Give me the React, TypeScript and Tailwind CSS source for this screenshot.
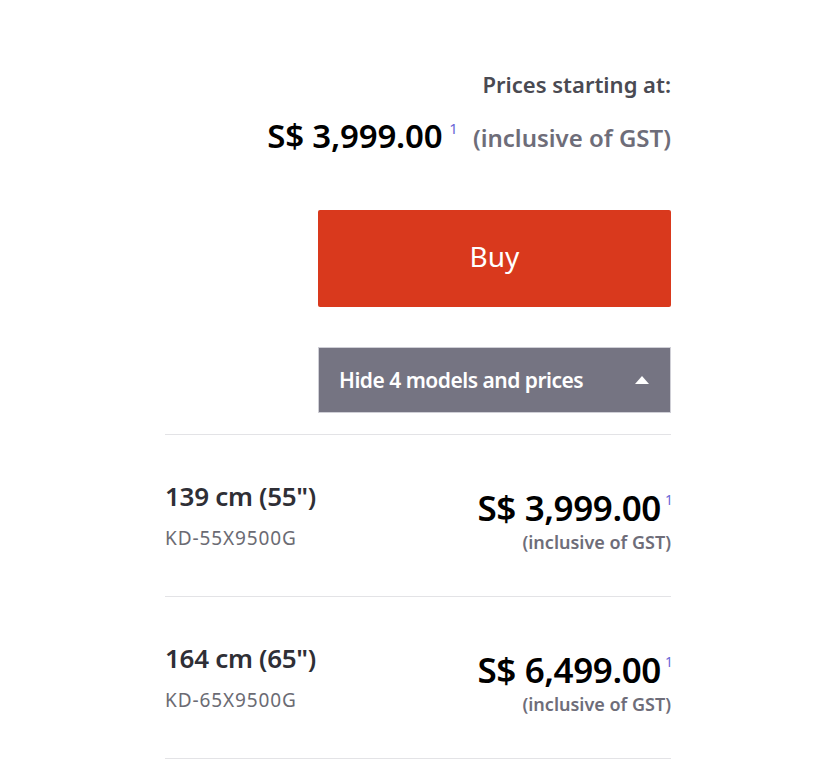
import React from "react";

const font = { fontFamily: '"Noto Sans", "Open Sans", sans-serif' };

function Row({ size, model, price }: { size: string; model: string; price: string }) {
  return (
    <div className="flex justify-between h-[162px] border-b border-[#e3e3e6]">
      <div className="pt-[45px]">
        <div className="text-[26px] leading-[32px] font-semibold text-[#2f2f36] tracking-[-0.3px]">{size}</div>
        <div className="mt-[13px] text-[19px] leading-[26px] tracking-[0.9px] text-[#6b6b73]">{model}</div>
      </div>
      <div className="pt-[53px] flex flex-col items-end">
        <div className="flex items-start leading-[40px]">
          <span className="text-[35px] font-semibold text-black tracking-[-0.4px]">{price}</span>
          <span className="ml-[4px] -mr-[2px] text-[14px] leading-[24px] text-[#6a66d6]">1</span>
        </div>
        <div className="mt-[2px] text-[18px] leading-[24px] font-semibold text-[#6e6d79]">(inclusive of GST)</div>
      </div>
    </div>
  );
}

export default function App() {
  return (
    <div className="min-h-[768px] bg-white" style={font}>
      <div className="ml-[165px] w-[506px] pt-[69px]">
        <div className="flex flex-col items-end">
          <div className="text-[22px] leading-[30px] font-semibold text-[#4a4a52]">Prices starting at:</div>
          <div className="mt-[17px] flex items-start leading-[40px]">
            <span className="text-[33px] font-semibold text-black tracking-[-0.2px]">S$ 3,999.00</span>
            <span className="ml-[7px] text-[15px] leading-[24px] text-[#6a66d6]">1</span>
            <span className="ml-[15px] text-[24px] leading-[44px] font-semibold text-[#6e6d79]">(inclusive of GST)</span>
          </div>
          <button className="mt-[50px] w-[353px] h-[97px] bg-[#d9391d] rounded-[2px] text-white text-[28px] leading-[36px] flex items-center justify-center pb-[6px]">
            Buy
          </button>
          <button className="mt-[40px] w-[353px] h-[66px] bg-[#757482] border border-[#cfcfd6] text-white flex items-center justify-between pl-[20px] pr-[20px]">
            <span className="text-[21px] leading-[28px] font-semibold tracking-[-0.5px]">Hide 4 models and prices</span>
            <svg width="14" height="8" viewBox="0 0 14 8" className="mr-[1px]">
              <path d="M7 0 L14 8 L0 8 Z" fill="white" />
            </svg>
          </button>
        </div>
        <div className="mt-[21px] border-t border-[#e3e3e6]">
          <Row size={'139 cm (55")'} model="KD-55X9500G" price="S$ 3,999.00" />
          <Row size={'164 cm (65")'} model="KD-65X9500G" price="S$ 6,499.00" />
        </div>
      </div>
    </div>
  );
}
